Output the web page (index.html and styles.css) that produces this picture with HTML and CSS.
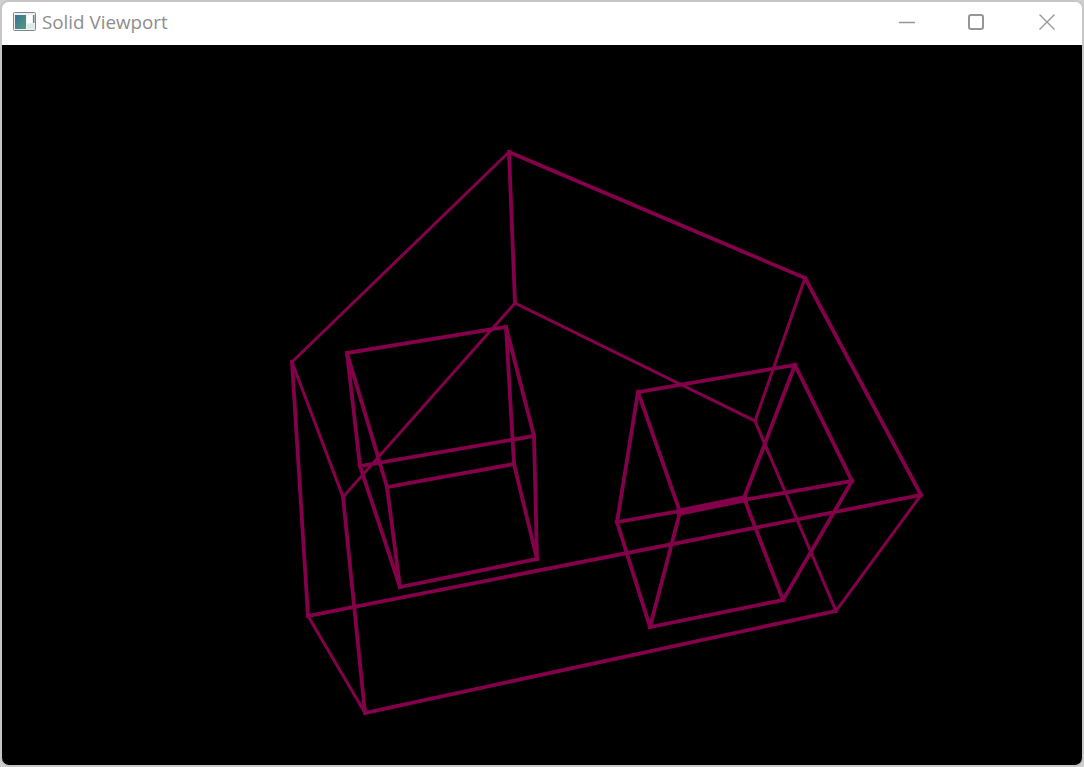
FILE: index.html
```html
<!DOCTYPE html>
<html lang="en">
<head>
<meta charset="utf-8">
<title>Solid Viewport</title>
<link rel="stylesheet" href="styles.css">
</head>
<body>
<div class="window">
  <header class="titlebar">
    <svg class="app-icon" viewBox="0 0 24 20" aria-hidden="true">
      <defs>
        <linearGradient id="pane" x1="0" y1="0" x2="1" y2="1">
          <stop offset="0" stop-color="#3f6f9f"/>
          <stop offset="1" stop-color="#4f9f73"/>
        </linearGradient>
      </defs>
      <rect x="0.5" y="0.5" width="22" height="18" rx="1" fill="#eef1f3" stroke="#7e8790"/>
      <rect x="2" y="3" width="11" height="14" fill="url(#pane)"/>
      <rect x="14" y="3" width="5" height="8" fill="#fff"/>
      <rect x="20" y="3" width="1.5" height="8" fill="#5b8f8b"/>
      <rect x="14" y="12" width="7" height="5" fill="#dfe9e4"/>
    </svg>
    <span class="title">Solid Viewport</span>
    <div class="controls">
      <svg class="ctl ctl-min" viewBox="0 0 16 16" aria-hidden="true"><path d="M0 8.5H16"/></svg>
      <svg class="ctl ctl-max" viewBox="0 0 16 16" aria-hidden="true"><rect x="1" y="1" width="14" height="14" rx="2"/></svg>
      <svg class="ctl ctl-close" viewBox="0 0 16 16" aria-hidden="true"><path d="M0.5 0.5L15.5 15.5M15.5 0.5L0.5 15.5"/></svg>
    </div>
  </header>
  <main class="viewport">
    <svg class="scene" viewBox="2 45 1080 720" aria-label="Wireframe solid">
      <g class="thin">
        <path d="M292 362L509 152"/>
        <path d="M515 303L343 497"/>
        <path d="M292 362L343 497"/>
        <path d="M308 616L365 713"/>
        <path d="M921 495L836 611"/>
        <path d="M805 278L755 421"/>
        <path d="M755 421L836 611"/>
        <path d="M515 303L755 421"/>
      </g>
      <g class="mid">
        <path d="M343 497L365 713"/>
        <path d="M509 152L805 278"/>
        <path d="M509 152L515 303"/>
        <path d="M805 278L921 495"/>
        <path d="M921 495L308 616"/>
        <path d="M836 611L365 713"/>
        <path d="M292 362L308 616"/>

        <path d="M347 353L506 327"/>
        <path d="M347 353L360 466"/>
        <path d="M347 353L387 487"/>
        <path d="M506 327L514 464"/>
        <path d="M506 327L534 436"/>
        <path d="M360 466L534 436"/>
        <path d="M387 487L514 464"/>
        <path d="M360 466L400 587"/>
        <path d="M387 487L400 587"/>
        <path d="M534 436L537 559"/>
        <path d="M514 464L537 559"/>
        <path d="M400 587L537 559"/>

        <path d="M638 392L795 365"/>
        <path d="M638 392L617 522"/>
        <path d="M638 392L680 512"/>
        <path d="M795 365L852 481"/>
        <path d="M795 365L744 498"/>
        <path d="M617 522L852 481"/>
        <path d="M680 512L650 627"/>
        <path d="M617 522L650 627"/>
        <path d="M744 498L783 600"/>
        <path d="M852 481L783 600"/>
        <path d="M650 627L783 600"/>
      </g>
      <path class="thick" d="M680 512L744 499"/>
    </svg>
  </main>
</div>
</body>
</html>
```
FILE: styles.css
```css
html, body {
  margin: 0;
  height: 100%;
  background: #cfcfcf;
  overflow: hidden;
}

.window {
  box-sizing: border-box;
  height: 767px;
  display: flex;
  flex-direction: column;
  border: 2px solid #c6c6c6;
  border-radius: 9px;
  overflow: hidden;
  background: #fff;
}

.titlebar {
  flex: 0 0 43px;
  display: flex;
  align-items: center;
  padding-left: 11px;
  background: #fff;
}

.app-icon {
  width: 24px;
  height: 20px;
  margin-right: 5px;
  margin-top: -4px;
}

.title {
  font-family: "Open Sans", "Noto Sans", sans-serif;
  font-size: 18.8px;
  color: #8d8d8d;
  white-space: nowrap;
  margin-top: -4px;
}

.controls {
  margin-left: auto;
  display: flex;
  align-items: center;
  padding-right: 27px;
  margin-top: -3px;
}

.ctl {
  width: 16px;
  height: 16px;
  fill: none;
  stroke: #969696;
  stroke-width: 1.3;
}

.ctl-max {
  stroke-width: 2;
  margin: 0 55px 0 53px;
}

.viewport {
  flex: 1;
  background: #000;
  min-height: 0;
}

.scene {
  display: block;
  width: 1080px;
  height: 720px;
}

.scene path {
  fill: none;
  stroke: #85004b;
  stroke-linecap: square;
}

.thin path {
  stroke-width: 3;
}

.mid path {
  stroke-width: 3.8;
}

.scene .thick {
  stroke-width: 7;
}
```
